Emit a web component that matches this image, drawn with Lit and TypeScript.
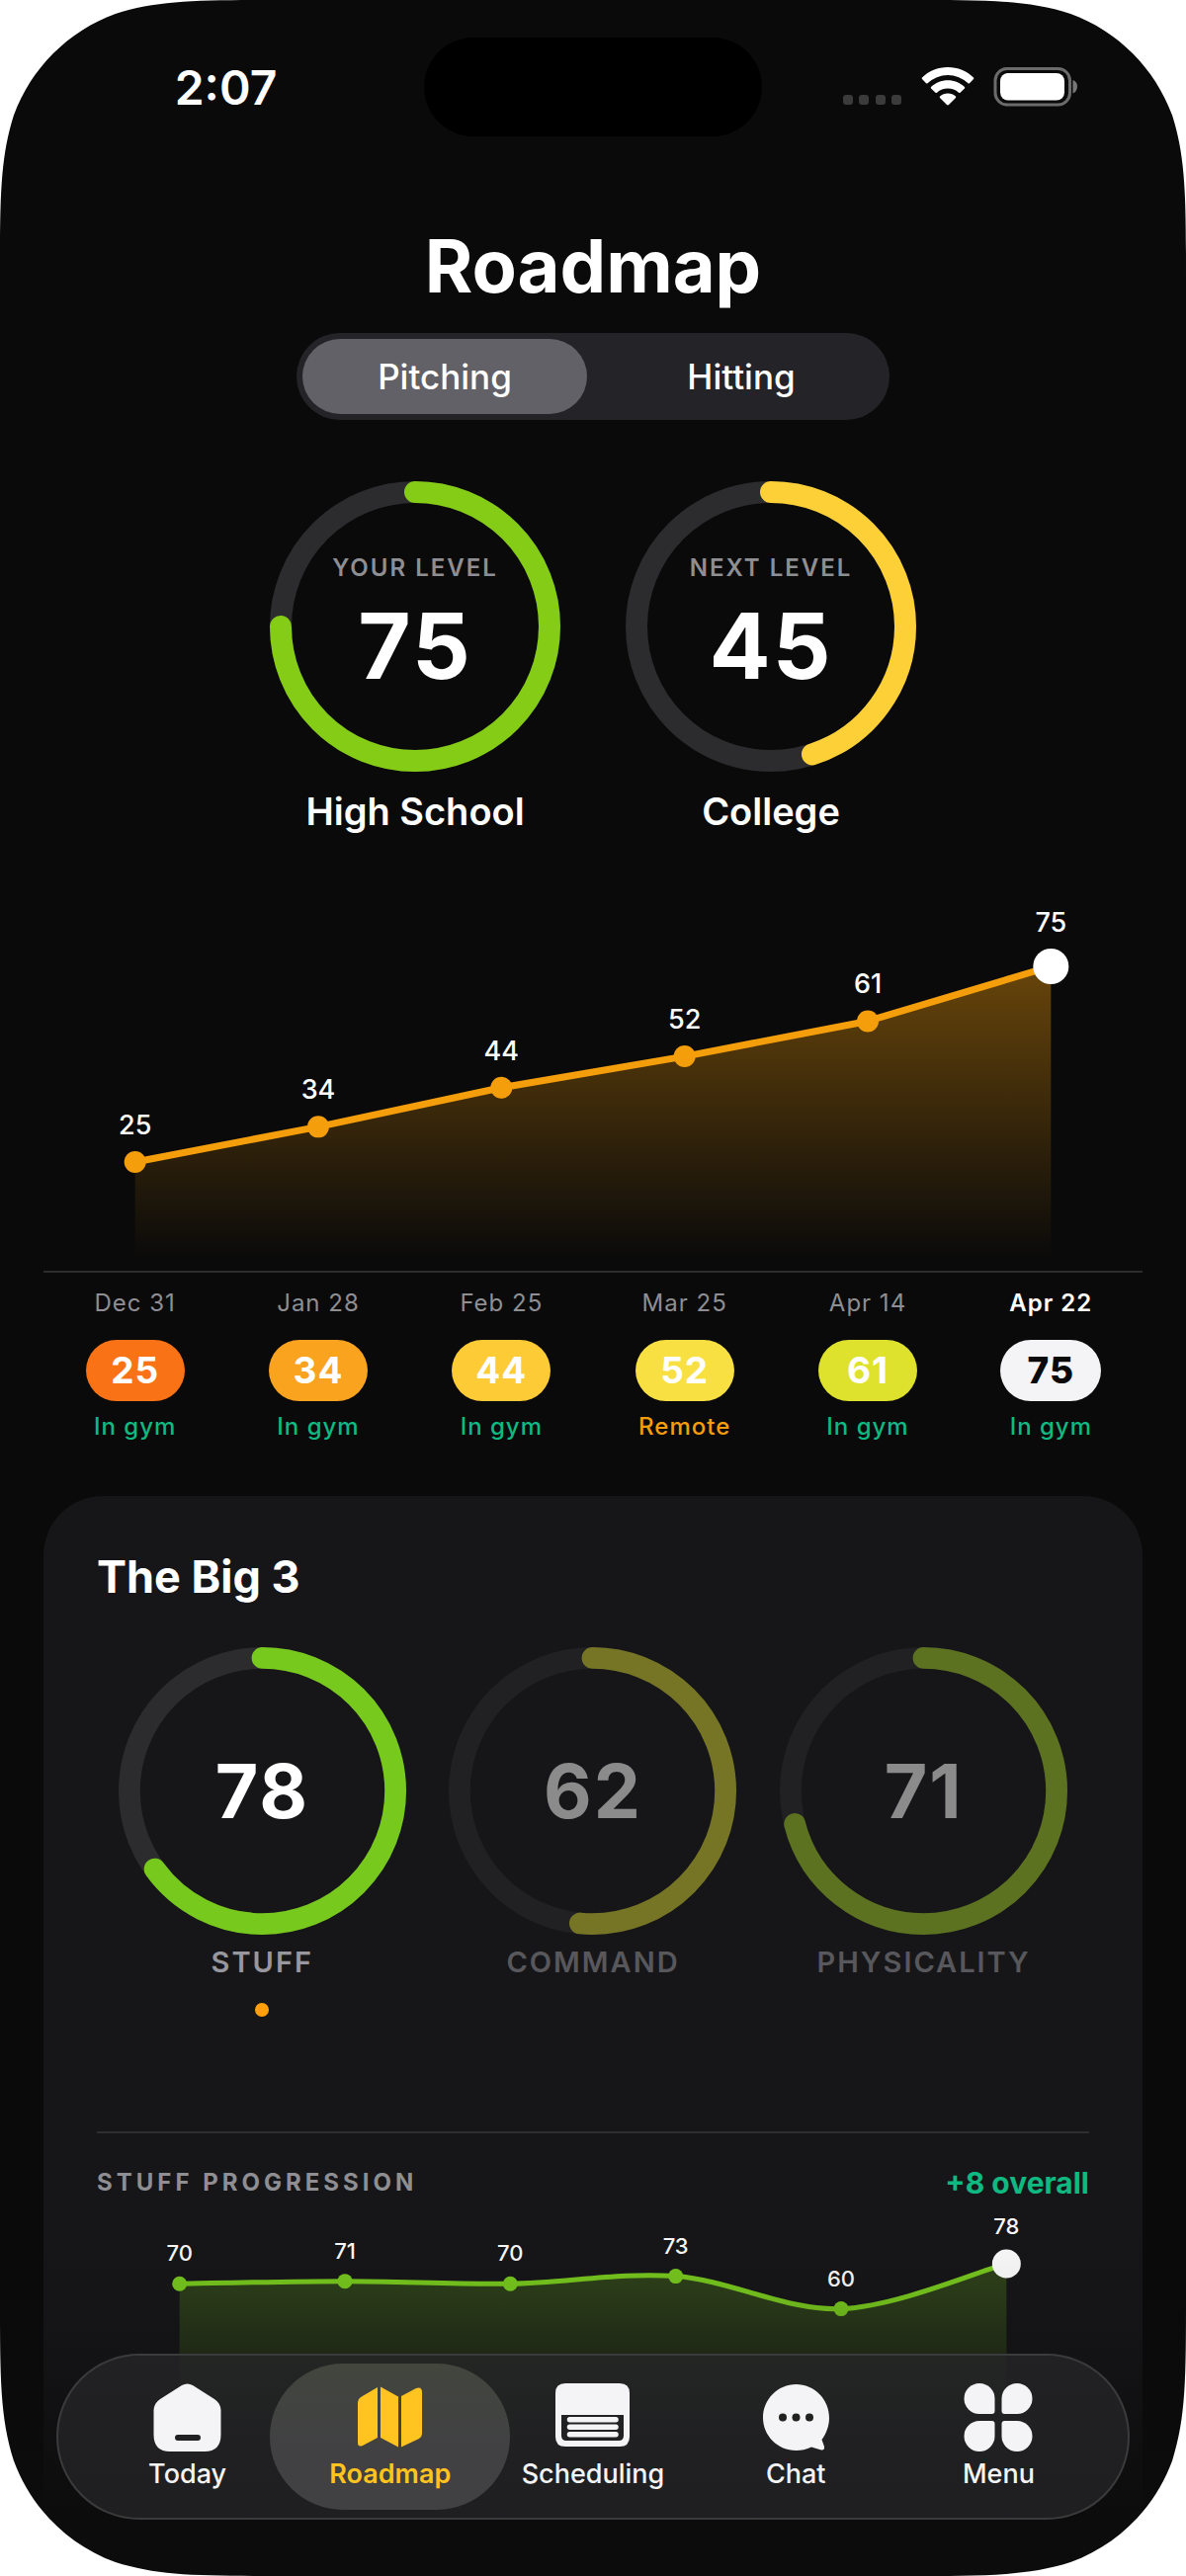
import { LitElement, html, svg, css, nothing } from "lit";
import { customElement, property, state } from "lit/decorators.js";
import { classMap } from "lit/directives/class-map.js";

interface Session {
  date: string;
  score: number;
  place: string;
  color: string;
}

const SESSIONS: Session[] = [
  { date: "Dec 31", score: 25, place: "In gym", color: "#f97316" },
  { date: "Jan 28", score: 34, place: "In gym", color: "#faa31f" },
  { date: "Feb 25", score: 44, place: "In gym", color: "#fdcb35" },
  { date: "Mar 25", score: 52, place: "Remote", color: "#f8e043" },
  { date: "Apr 14", score: 61, place: "In gym", color: "#dfe22c" },
  { date: "Apr 22", score: 75, place: "In gym", color: "#f4f4f7" },
];

const SKILLS = [
  { name: "Stuff", score: 78, fill: 65, color: "#78c91e" },
  { name: "Command", score: 62, fill: 51.5, color: "#d6d432" },
  { name: "Physicality", score: 71, fill: 71, color: "#a2ce28" },
];

const STUFF_SCORES = [70, 71, 70, 73, 60, 78];

/* Circular gauge whose arc starts at twelve o'clock. */
@customElement("level-ring")
export class LevelRing extends LitElement {
  @property({ type: Number }) fill = 0;
  @property() color = "#84cc16";

  static styles = css`
    :host {
      display: grid;
      place-items: center;
    }
    .dial,
    .center {
      grid-area: 1 / 1;
    }
    .dial {
      display: block;
      width: 100%;
    }
    .center {
      display: flex;
      flex-direction: column;
      align-items: center;
    }
  `;

  render() {
    return html`
      <svg class="dial" viewBox="0 0 294 294" aria-hidden="true">
        <g fill="none" stroke-width="22" transform="rotate(-90 147 147)">
          <circle cx="147" cy="147" r="136" stroke="#2c2c2e" />
          <circle cx="147" cy="147" r="136" pathLength="100" stroke=${this.color}
            stroke-linecap="round" stroke-dasharray="${this.fill} 100" />
        </g>
      </svg>
      <div class="center"><slot></slot></div>
    `;
  }
}

/* Line chart with a fading area, one evenly wide column for each value. */
@customElement("trend-chart")
export class TrendChart extends LitElement {
  @property({ attribute: false }) values: number[] = [];
  @property() color = "#f59e0b";
  @property({ type: Boolean }) curved = false;
  @property({ type: Number }) width = 1112;
  @property({ type: Number }) height = 406;
  @property({ type: Number }) zero = 395;
  @property({ type: Number }) unit = 3.96;
  @property({ type: Number }) line = 7;
  @property({ type: Number }) dot = 11;
  @property({ type: Number }) lastDot = 18;
  @property({ type: Number }) text = 27;
  @property({ type: Number }) lift = 28;
  @property({ type: Number }) opacity = 0.4;
  @property({ type: Number }) floor = 394;

  static styles = css`
    :host {
      display: block;
    }
    .plot {
      display: block;
      width: 100%;
    }
    .value {
      fill: #fff;
      font-family: Inter, "Liberation Sans", sans-serif;
      font-weight: 500;
      text-anchor: middle;
    }
  `;

  render() {
    const step = this.width / this.values.length;
    const pts = this.values.map((v, i) => [step * (i + 0.5), this.zero - v * this.unit]);
    let d = `M${pts[0]?.join(" ")}`;
    for (let i = 0; i < pts.length - 1; i++) {
      const [a, b] = [pts[i], pts[i + 1]];
      if (!this.curved) {
        d += `L${b.join(" ")}`;
        continue;
      }
      const before = pts[i - 1] ?? a;
      const after = pts[i + 2] ?? b;
      d += `C${a[0] + (b[0] - before[0]) / 6} ${a[1] + (b[1] - before[1]) / 6} ${b[0] - (after[0] - a[0]) / 6} ${b[1] - (after[1] - a[1]) / 6} ${b.join(" ")}`;
    }
    const last = pts.length - 1;
    const top = Math.min(...pts.map((p) => p[1]));
    return html`
      <svg class="plot" viewBox="0 0 ${this.width} ${this.height}" role="img" aria-label="Scores over time">
        <defs>
          <linearGradient id="fade" gradientUnits="userSpaceOnUse" x1="0" x2="0" y1=${top} y2=${this.floor}>
            <stop offset="0" stop-color=${this.color} stop-opacity=${this.opacity} />
            <stop offset="1" stop-color=${this.color} stop-opacity="0" />
          </linearGradient>
        </defs>
        <path d="${d}V${this.floor}H${pts[0]?.[0]}Z" fill="url(#fade)" />
        <path d=${d} fill="none" stroke=${this.color} stroke-width=${this.line} stroke-linejoin="round" />
        ${pts.map(([x, y], i) => {
          const r = i === last ? this.lastDot : this.dot;
          const up = i === last ? this.lift + 7 : this.lift;
          return svg`
            <circle cx=${x} cy=${y} r=${r} fill=${i === last ? "#fff" : this.color} />
            <text class="value" x=${x} y=${y - up} font-size=${this.text}>${this.values[i]}</text>`;
        })}
      </svg>
    `;
  }
}

const ICONS = {
  today: svg`<path fill="#f4f4f6" fill-rule="evenodd" d="M29 2Q34.500 -1 40 2L62 16Q68 20 68.500 27V52Q68.500 69 52 69H17Q0.500 69 0.500 52V27Q1 20 7 16ZM25 52a3 3 0 0 0 0 6H45a3 3 0 0 0 0-6Z"/>`,
  roadmap: svg`<path fill="#ffc41f" d="M2 19Q2 16 5 14L22 4V55L7 63Q2 65 2 60ZM25 3.500L43 13.500V64.500L25 55ZM46 13L61 5Q67 3 67 9V51Q67 54 64 56L46 64.500Z"/>`,
  scheduling: svg`<path fill="#f4f4f6" fill-rule="evenodd" d="M10 0H65Q75 0 75 10V54Q75 64 65 64H10Q0 64 0 54V10Q0 0 10 0ZM6 32V53Q6 58 11 58H64Q69 58 69 53V32Z"/><path stroke="#f4f4f6" stroke-width="5.500" stroke-linecap="round" d="M14.500 36.800H61M14.500 44.300H61M14.500 51.800H61"/>`,
  chat: svg`<path fill="#f4f4f6" fill-rule="evenodd" d="M34.500 1C53 1 68 16 68 35C68 43 65 51 60.500 57L63 64Q63.500 68 60 67.500L50 64.500C45 67 39.500 68 34.500 68C16 68 1 53 1 35C1 16 16 1 34.500 1Z"/><g fill="#20221f"><circle cx="21" cy="34.500" r="4"/><circle cx="34.500" cy="34.500" r="4"/><circle cx="48" cy="34.500" r="4"/></g>`,
  menu: svg`<g fill="#f4f4f6"><path d="M16 0A15.500 15.500 0 0 1 31.500 15.500V28Q31.500 31 28.500 31H16A15.500 15.500 0 0 1 16 0Z"/><path d="M54 0A15.500 15.500 0 0 0 38.500 15.500V28Q38.500 31 41.500 31H54A15.500 15.500 0 0 0 54 0Z"/><path d="M16 69A15.500 15.500 0 0 0 31.500 53.500V41Q31.500 38 28.500 38H16A15.500 15.500 0 0 0 16 69Z"/><path d="M54 69A15.500 15.500 0 0 1 38.500 53.500V41Q38.500 38 41.500 38H54A15.500 15.500 0 0 1 54 69Z"/></g>`,
};

const TABS = [
  { id: "today", label: "Today", box: "0 0 69 69" },
  { id: "roadmap", label: "Roadmap", box: "0 0 69 69" },
  { id: "scheduling", label: "Scheduling", box: "0 0 75 69" },
  { id: "chat", label: "Chat", box: "0 0 69 69" },
  { id: "menu", label: "Menu", box: "0 0 70 69" },
] as const;

@customElement("app-root")
export class AppRoot extends LitElement {
  @state() private mode = "Pitching";
  @state() private skill = "Stuff";
  @state() private tab = "roadmap";

  static styles = css`
    :host {
      display: block;
      font-family: Inter, "Liberation Sans", sans-serif;
      color: #fff;
    }
    button {
      font: inherit;
      color: inherit;
      background: none;
      border: 0;
      padding: 0;
      cursor: pointer;
    }
    h1,
    h2,
    h3,
    ol {
      margin: 0;
      padding: 0;
    }
    .screen {
      position: relative;
      display: flex;
      flex-direction: column;
      min-height: 100vh;
      background: #0a0a0a;
      overflow: hidden;
    }
    .status {
      display: grid;
      grid-template-columns: 1fr 342px 1fr;
      align-items: center;
      justify-items: center;
      padding: 38px 28px 0;
    }
    .time {
      font-size: 48px;
      font-weight: 600;
    }
    .island {
      width: 100%;
      height: 100px;
      border-radius: 50px;
      background: #000;
    }
    .signals {
      width: 238px;
      height: 40px;
    }
    .title {
      margin-top: 87px;
      font-size: 74px;
      line-height: 88px;
      font-weight: 700;
      text-align: center;
    }
    .modes {
      display: grid;
      grid-template-columns: 1fr 1fr;
      gap: 12px;
      align-self: center;
      box-sizing: border-box;
      width: 50%;
      height: 88px;
      margin-top: 24px;
      padding: 6px;
      border-radius: 44px;
      background: #242328;
    }
    .mode {
      border-radius: 38px;
      font-size: 35px;
      font-weight: 500;
    }
    .mode.on {
      background: #626167;
    }
    .levels {
      display: flex;
      justify-content: center;
      gap: 66px;
      margin-top: 62px;
    }
    .level {
      width: 294px;
    }
    .caption {
      margin-top: 20px;
      font-size: 24px;
      line-height: 30px;
      font-weight: 600;
      letter-spacing: 2px;
      color: #8e8e93;
      text-transform: uppercase;
    }
    .level-score {
      font-size: 92px;
      line-height: 108px;
      font-weight: 700;
      letter-spacing: 2px;
      margin: 10px 0 20px;
    }
    .level-name {
      margin-top: 18px;
      font-size: 38px;
      line-height: 44px;
      font-weight: 600;
      text-align: center;
    }
    .history {
      margin: 37px 44px 0;
    }
    .sessions {
      display: grid;
      grid-template-columns: repeat(6, 1fr);
      padding-top: 16px;
      border-top: 2px solid #2c2c2e;
      list-style: none;
      font-size: 24px;
      line-height: 30px;
      letter-spacing: 1px;
    }
    .session {
      display: flex;
      flex-direction: column;
      align-items: center;
    }
    .date {
      color: #8e8e93;
    }
    .pill {
      min-width: 100px;
      box-sizing: border-box;
      margin: 22px 0 11px;
      border-radius: 32px;
      font-size: 37px;
      line-height: 62px;
      font-weight: 700;
      text-align: center;
    }
    .place {
      font-weight: 500;
      color: #10b981;
    }
    .place.remote {
      color: #f59e0b;
    }
    .session.latest .date {
      color: #fff;
      font-weight: 600;
    }
    .session.latest .pill {
      min-width: 102px;
      color: #0a0a0a;
      font-weight: 800;
    }
    .card {
      flex: 1;
      margin: 55px 44px 0;
      padding: 55px 54px 0;
      border-radius: 60px 60px 0 0;
      background: #161618;
    }
    .card-title {
      font-size: 45px;
      line-height: 54px;
      font-weight: 700;
    }
    .skills {
      display: grid;
      grid-template-columns: repeat(3, 1fr);
      justify-items: center;
      margin-top: 44px;
    }
    .skill {
      display: flex;
      flex-direction: column;
      align-items: center;
      opacity: 0.5;
    }
    .skill.on {
      opacity: 1;
    }
    .skill-ring {
      width: 291px;
    }
    .skill-score {
      font-size: 75px;
      line-height: 90px;
      font-weight: 700;
      letter-spacing: 2px;
    }
    .skill-name {
      margin-top: 10px;
      font-size: 29px;
      line-height: 36px;
      font-weight: 600;
      letter-spacing: 2px;
      color: #98979f;
      text-transform: uppercase;
    }
    .marker {
      width: 14px;
      height: 14px;
      margin-top: 23px;
      border-radius: 50%;
    }
    .skill.on .marker {
      background: #ff9f0a;
    }
    .progress-head {
      display: flex;
      justify-content: space-between;
      align-items: center;
      margin-top: 116px;
      padding-top: 32px;
      border-top: 2px solid #2f2f32;
      line-height: 36px;
    }
    .progress-title {
      font-size: 24px;
      font-weight: 700;
      letter-spacing: 4px;
      color: #8e8e93;
      text-transform: uppercase;
    }
    .gain {
      font-size: 30px;
      font-weight: 700;
      color: #10b981;
    }
    .shade {
      position: absolute;
      inset: auto 0 0 0;
      height: 380px;
      background: linear-gradient(
        rgba(12, 12, 13, 0),
        rgba(12, 12, 13, 0.08) 25%,
        rgba(12, 12, 13, 0.25) 40%,
        #0c0c0d 85%
      );
    }
    .tabs {
      position: absolute;
      left: 57px;
      right: 57px;
      bottom: 57px;
      display: grid;
      grid-template-columns: repeat(5, 1fr);
      padding: 8px 28px;
      border: 2px solid #3a3b3b;
      border-radius: 85px;
      background: linear-gradient(rgba(37, 37, 39, 0.8), rgba(32, 32, 34, 0.95));
    }
    .tab {
      display: flex;
      flex-direction: column;
      align-items: center;
      margin: 0 -19px;
      padding: 20px 0;
      border-radius: 74px;
      font-size: 27px;
      line-height: 32px;
      font-weight: 500;
      color: #f4f4f6;
    }
    .tab.on {
      background: linear-gradient(#42463d, #414143 55%);
      color: #ffc41f;
      font-weight: 600;
    }
    .tab-icon {
      height: 69px;
      margin-bottom: 7px;
    }
    .corner {
      position: absolute;
      width: 283px;
      height: 283px;
      fill: #fff;
      pointer-events: none;
    }
    .top {
      top: 0;
    }
    .bottom {
      bottom: 0;
    }
    .left {
      left: 0;
    }
    .right {
      right: 0;
    }
  `;

  private corner(where: string, turn: number) {
    return html`<svg class="corner ${where}" viewBox="0 0 283 283" aria-hidden="true">
      <path transform="rotate(${turn} 141.5 141.5)"
        d="M0 0H283C201.400 0 160.700 0 116.800 13.900C69 31.300 31.300 69 13.900 116.800C0 160.700 0 201.400 0 283Z" />
    </svg>`;
  }

  private statusBar() {
    return html`
      <header class="status">
        <span class="time">2:07</span>
        <div class="island"></div>
        <svg class="signals" viewBox="0 0 238 40" aria-hidden="true">
          <g fill="#3b3b3c">
            <rect x="0" y="28" width="10" height="10" rx="3" />
            <rect x="16" y="28" width="10" height="10" rx="3" />
            <rect x="33" y="28" width="10" height="10" rx="3" />
            <rect x="49" y="28" width="10" height="10" rx="3" />
          </g>
          <g fill="#fff">
            <path d="M106 0C116 0 125.500 4 132 10.500Q132.500 11.200 132 12L128 16.200Q127.200 16.800 126.500 16.200A30 30 0 0 0 85.500 16.200Q84.800 16.800 84 16.200L80 12Q79.500 11.200 80 10.500C86.500 4 96 0 106 0Z" />
            <path d="M106 13.200C112.500 13.200 118.500 15.700 123 20Q123.500 20.700 123 21.400L118.500 25.800Q117.800 26.400 117 25.800A16.500 16.500 0 0 0 95 25.800Q94.200 26.400 93.500 25.800L89 21.400Q88.500 20.700 89 20C93.500 15.700 99.500 13.200 106 13.200Z" />
            <path d="M106 26.400C109 26.400 112 27.500 114 29.500Q114.500 30.200 114 31L107 38Q106 38.900 105 38L98 31Q97.500 30.200 98 29.500C100 27.500 103 26.400 106 26.400Z" />
            <rect x="159" y="6" width="65" height="27.500" rx="8" />
          </g>
          <rect x="154" y="1.500" width="75.500" height="36.500" rx="12" fill="none" stroke="#6b6b6c" stroke-width="3" />
          <path d="M232.500 13C235.500 14 237 16.500 237 19.500S235.500 25.500 232.500 26.500Z" fill="#77777a" />
        </svg>
      </header>
    `;
  }

  private levels() {
    return html`
      <section class="levels">
        <div class="level">
          <level-ring fill="75" color="#84cc16">
            <span class="caption">Your level</span>
            <span class="level-score">75</span>
          </level-ring>
          <div class="level-name">High School</div>
        </div>
        <div class="level">
          <level-ring fill="45" color="#fdd037">
            <span class="caption">Next level</span>
            <span class="level-score">45</span>
          </level-ring>
          <div class="level-name">College</div>
        </div>
      </section>
    `;
  }

  private history() {
    return html`
      <section class="history">
        <trend-chart .values=${SESSIONS.map((s) => s.score)}></trend-chart>
        <ol class="sessions">
          ${SESSIONS.map(
            (s, i) => html`
              <li class=${classMap({ session: true, latest: i === SESSIONS.length - 1 })}>
                <span class="date">${s.date}</span>
                <span class="pill" style="background:${s.color}">${s.score}</span>
                <span class=${classMap({ place: true, remote: s.place === "Remote" })}>${s.place}</span>
              </li>
            `,
          )}
        </ol>
      </section>
    `;
  }

  private bigThree() {
    return html`
      <section class="card">
        <h2 class="card-title">The Big 3</h2>
        <div class="skills">
          ${SKILLS.map(
            (s) => html`
              <button
                class=${classMap({ skill: true, on: s.name === this.skill })}
                aria-pressed=${s.name === this.skill}
                @click=${() => (this.skill = s.name)}
              >
                <level-ring class="skill-ring" .fill=${s.fill} .color=${s.color}>
                  <span class="skill-score">${s.score}</span>
                </level-ring>
                <span class="skill-name">${s.name}</span>
                <span class="marker"></span>
              </button>
            `,
          )}
        </div>
        <div class="progress-head">
          <h3 class="progress-title">Stuff progression</h3>
          <span class="gain">+8 overall</span>
        </div>
        <trend-chart
          curved
          .values=${STUFF_SCORES}
          color="#78c91e"
          .width=${1004}
          .height=${370}
          .zero=${262}
          .unit=${2.54}
          .line=${5}
          .dot=${7.5}
          .lastDot=${14.5}
          .text=${22}
          .lift=${23}
          .opacity=${0.25}
          .floor=${320}
        ></trend-chart>
      </section>
    `;
  }

  render() {
    return html`
      <main class="screen">
        ${this.statusBar()}
        <h1 class="title">Roadmap</h1>
        <div class="modes">
          ${["Pitching", "Hitting"].map(
            (m) => html`<button
              class=${classMap({ mode: true, on: m === this.mode })}
              aria-pressed=${m === this.mode}
              @click=${() => (this.mode = m)}
            >${m}</button>`,
          )}
        </div>
        ${this.levels()} ${this.history()} ${this.bigThree()}
        <div class="shade"></div>
        <nav class="tabs">
          ${TABS.map(
            (t) => html`
              <button
                class=${classMap({ tab: true, on: t.id === this.tab })}
                aria-current=${t.id === this.tab ? "page" : nothing}
                @click=${() => (this.tab = t.id)}
              >
                <svg class="tab-icon" viewBox=${t.box} aria-hidden="true">${ICONS[t.id]}</svg>
                ${t.label}
              </button>
            `,
          )}
        </nav>
        ${this.corner("top left", 0)} ${this.corner("top right", 90)}
        ${this.corner("bottom right", 180)} ${this.corner("bottom left", 270)}
      </main>
    `;
  }
}
